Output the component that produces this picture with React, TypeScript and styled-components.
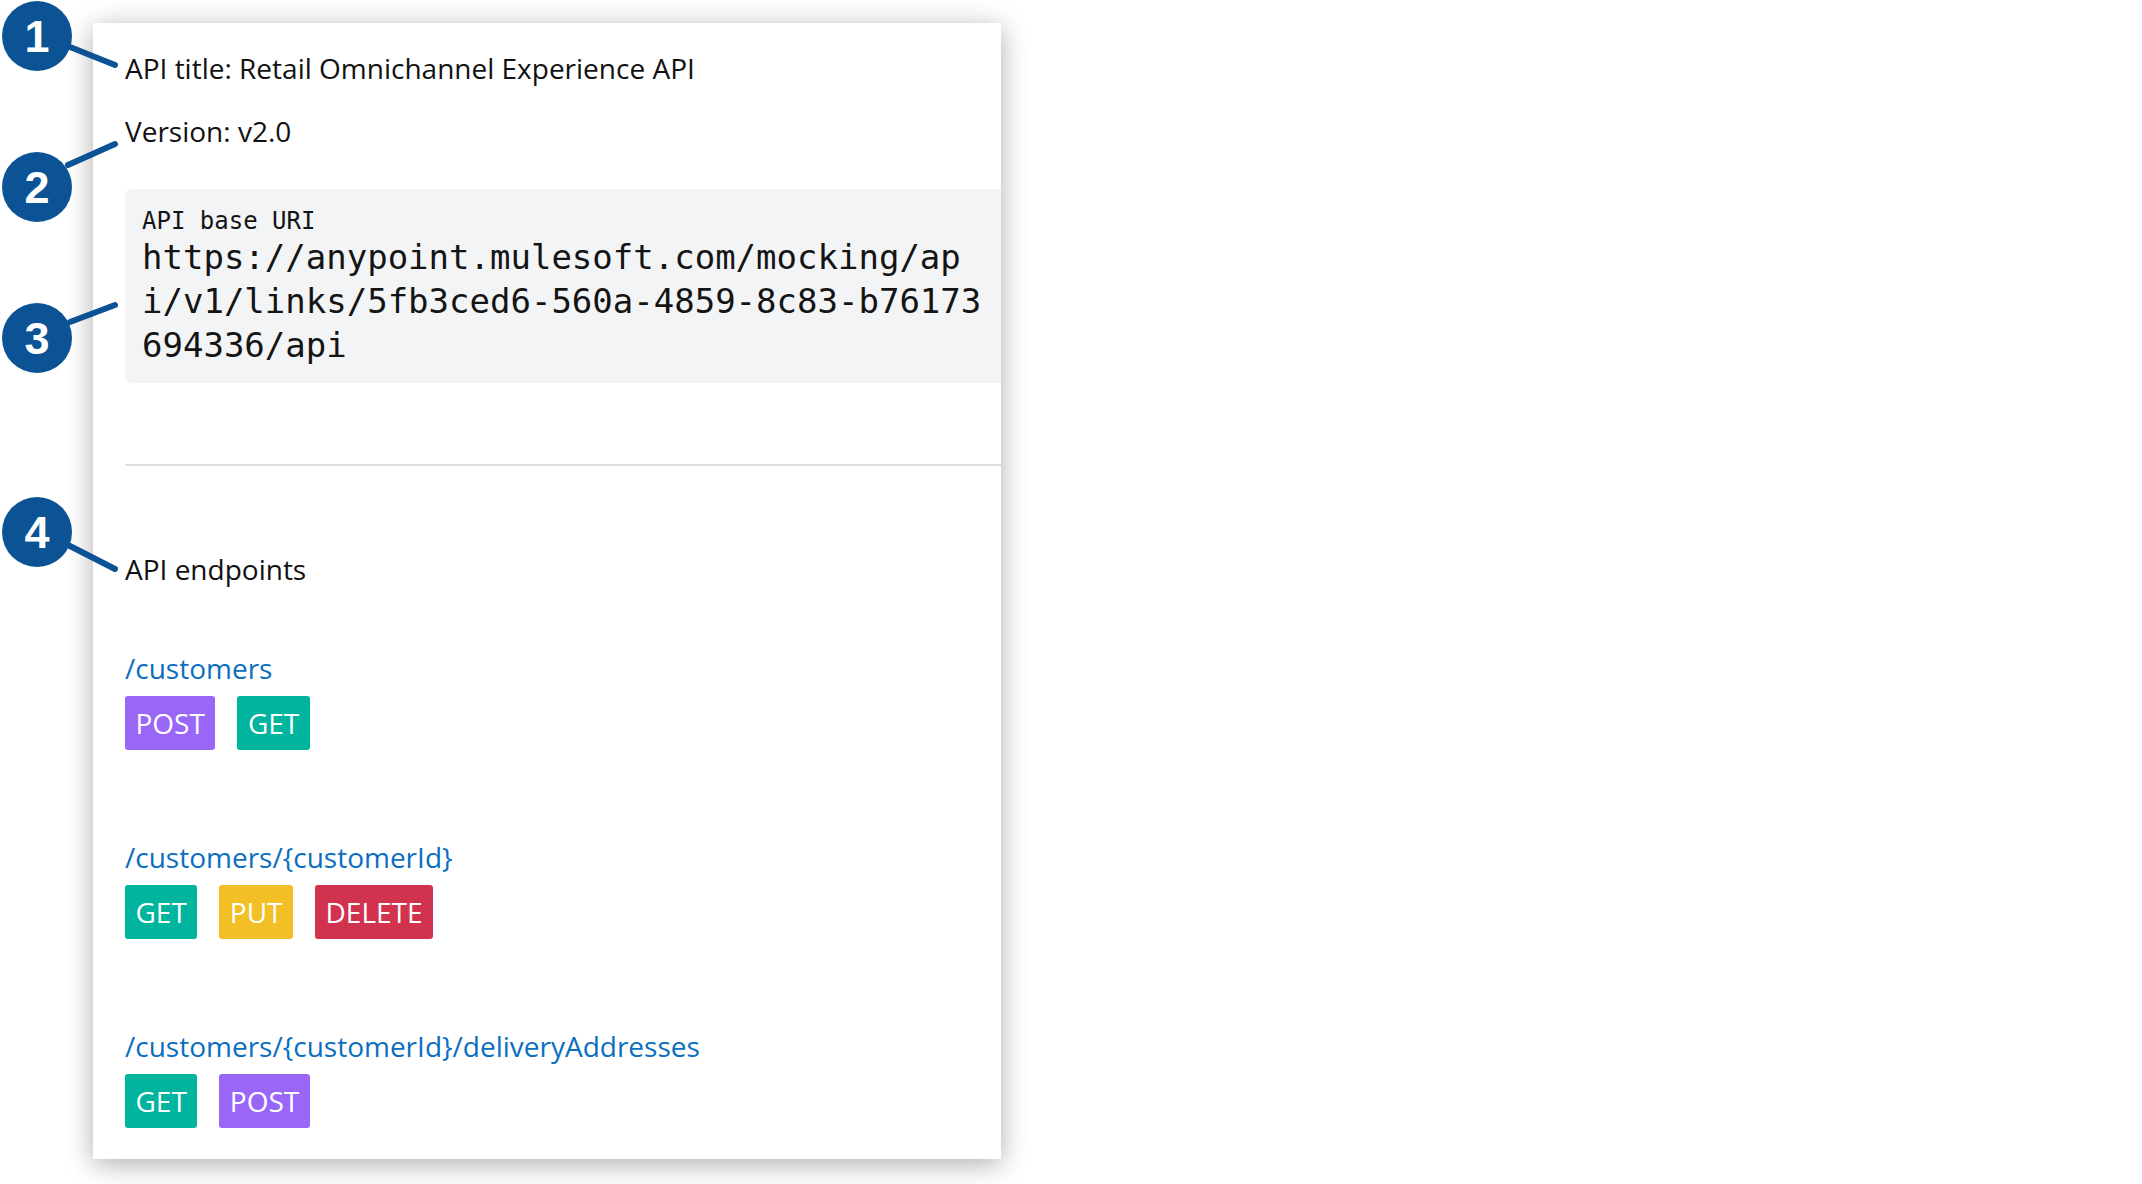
import React from "react";
import styled, { createGlobalStyle } from "styled-components";

const GlobalStyle = createGlobalStyle`
  html, body {
    margin: 0;
    padding: 0;
    background: #ffffff;
  }
  body {
    font-family: "Open Sans", "Noto Sans", sans-serif;
    color: #111111;
  }
`;

const Page = styled.div`
  position: relative;
  width: 2142px;
  height: 1184px;
  overflow: hidden;
`;

const Card = styled.div`
  margin: 23px 0 0 93px;
  width: 908px;
  height: 1136px;
  box-sizing: border-box;
  padding: 24px 0 0 32px;
  background: #ffffff;
  box-shadow: 0 5px 26px rgba(0, 0, 0, 0.32);
  display: flex;
  flex-direction: column;
  overflow: hidden;
`;

const Line = styled.p<{ $top?: number }>`
  margin: ${(p) => p.$top ?? 0}px 0 0;
  font-size: 28px;
  line-height: 42px;
  color: #111111;
`;

const CodeBlock = styled.div`
  margin-top: 37px;
  background: #f3f4f6;
  border-radius: 6px 0 0 6px;
  padding: 18px 0 16px 17px;
  font-family: "DejaVu Sans Mono", "Liberation Mono", monospace;
  color: #141414;
`;

const CodeLabel = styled.div`
  font-size: 24px;
  line-height: 28px;
`;

const CodeUrl = styled.div`
  font-size: 34px;
  line-height: 44px;
  white-space: pre;
`;

const Divider = styled.hr`
  margin: 81px 0 0;
  border: none;
  border-top: 2px solid #e0e0e0;
  height: 0;
`;

const EndpointList = styled.div`
  margin-top: 57px;
  display: flex;
  flex-direction: column;
  gap: 86px;
`;

const Endpoint = styled.div`
  display: flex;
  flex-direction: column;
  gap: 7px;
`;

const PathLink = styled.a`
  font-size: 28px;
  line-height: 42px;
  color: #0b6ebf;
  text-decoration: none;
`;

const Methods = styled.div`
  display: flex;
  gap: 22px;
`;

const methodColors: Record<string, string> = {
  GET: "#00b49d",
  POST: "#9966f7",
  PUT: "#f2bf26",
  DELETE: "#d1334f",
};

const Badge = styled.span<{ $method: string }>`
  display: inline-block;
  padding: 6px 10.5px;
  font-size: 28px;
  line-height: 42px;
  color: #ffffff;
  border-radius: 3px;
  background: ${(p) => methodColors[p.$method]};
`;

const Callouts = styled.svg`
  position: absolute;
  left: 0;
  top: 0;
  pointer-events: none;
`;

const CalloutNumber = styled.text`
  font-family: "Liberation Sans", Arial, sans-serif;
  font-weight: 700;
  font-size: 45px;
  fill: #ffffff;
`;

const callouts = [
  { n: 1, cy: 36, line: [70, 47, 115, 65] },
  { n: 2, cy: 187, line: [68, 165, 115, 144] },
  { n: 3, cy: 338, line: [70, 322, 115, 305] },
  { n: 4, cy: 532, line: [68, 545, 115, 569] },
];

const endpoints = [
  { path: "/customers", methods: ["POST", "GET"] },
  { path: "/customers/{customerId}", methods: ["GET", "PUT", "DELETE"] },
  { path: "/customers/{customerId}/deliveryAddresses", methods: ["GET", "POST"] },
];

export default function App() {
  return (
    <Page>
      <GlobalStyle />
      <Card>
        <Line>API title: Retail Omnichannel Experience API</Line>
        <Line $top={21}>Version: v2.0</Line>
        <CodeBlock>
          <CodeLabel>API base URI</CodeLabel>
          <CodeUrl>
            {"https://anypoint.mulesoft.com/mocking/ap\ni/v1/links/5fb3ced6-560a-4859-8c83-b76173\n694336/api"}
          </CodeUrl>
        </CodeBlock>
        <Divider />
        <Line $top={82}>API endpoints</Line>
        <EndpointList>
          {endpoints.map((e) => (
            <Endpoint key={e.path}>
              <PathLink href="#">{e.path}</PathLink>
              <Methods>
                {e.methods.map((m) => (
                  <Badge key={m} $method={m}>
                    {m}
                  </Badge>
                ))}
              </Methods>
            </Endpoint>
          ))}
        </EndpointList>
      </Card>
      <Callouts width="130" height="600" viewBox="0 0 130 600">
        {callouts.map((c) => (
          <g key={c.n}>
            <line
              x1={c.line[0]}
              y1={c.line[1]}
              x2={c.line[2]}
              y2={c.line[3]}
              stroke="#0b5394"
              strokeWidth="6"
              strokeLinecap="round"
            />
            <circle cx="37" cy={c.cy} r="35" fill="#0b5394" />
            <CalloutNumber x="37" y={c.cy + 16} textAnchor="middle">
              {c.n}
            </CalloutNumber>
          </g>
        ))}
      </Callouts>
    </Page>
  );
}
